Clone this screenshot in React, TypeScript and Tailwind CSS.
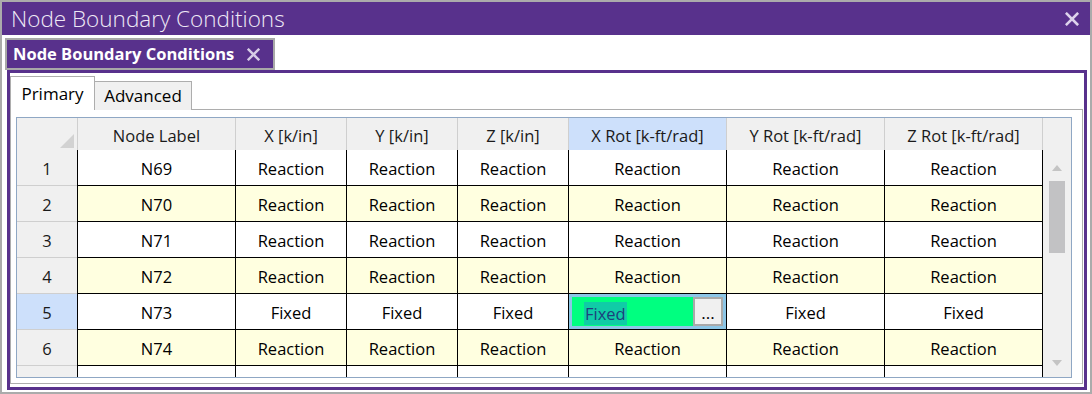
import React from 'react';

const COLS = [
  { label: 'Node Label', w: 'w-[158px]' },
  { label: 'X [k/in]', w: 'w-[111px]' },
  { label: 'Y [k/in]', w: 'w-[111px]' },
  { label: 'Z [k/in]', w: 'w-[111px]' },
  { label: 'X Rot [k-ft/rad]', w: 'w-[158px]' },
  { label: 'Y Rot [k-ft/rad]', w: 'w-[158px]' },
  { label: 'Z Rot [k-ft/rad]', w: 'w-[158px]' },
];

const ROWS = [
  { n: 1, node: 'N69', v: 'Reaction' },
  { n: 2, node: 'N70', v: 'Reaction' },
  { n: 3, node: 'N71', v: 'Reaction' },
  { n: 4, node: 'N72', v: 'Reaction' },
  { n: 5, node: 'N73', v: 'Fixed' },
  { n: 6, node: 'N74', v: 'Reaction' },
  { n: 7, node: '', v: '' },
];

const Close: React.FC<{ size: number; color: string }> = ({ size, color }) => (
  <svg width={size} height={size} viewBox="0 0 12 12">
    <path d="M1.5 1.5 L10.5 10.5 M10.5 1.5 L1.5 10.5" stroke={color} strokeWidth="2.2" strokeLinecap="square" />
  </svg>
);

const EditCell: React.FC = () => (
  <div className="flex h-full border-[3px] border-[#8cc6e6]">
    <div className="flex-1 bg-[#00ff80] flex items-center pl-[12px] pt-[3px]">
      <span className="bg-[#10cca6] text-[#1d3f7c] leading-[23px] px-[1px]">Fixed</span>
    </div>
    <div className="w-[30px] border-2 border-[#a9a9a9] bg-[#f0f0f0] flex items-center justify-center text-[17px] text-black pt-[2px]">
      ...
    </div>
  </div>
);

const Grid: React.FC = () => (
  <div className="w-[1056px] h-[261px] border border-[#8fa7c4] flex overflow-hidden">
    <div className="w-[1026px] flex flex-col">
      {/* header */}
      <div className="flex h-[32px] shrink-0 bg-[#f0f0f0] text-[#1a1a1a]">
        <div className="w-[60px] flex items-end justify-end pr-[3px] pb-[2px]">
          <svg width="14" height="14" viewBox="0 0 14 14">
            <path d="M14 0 L14 14 L0 14 Z" fill="#d2d2d2" />
          </svg>
        </div>
        {COLS.map((c, i) => (
          <div
            key={c.label}
            className={`${c.w} ${i === 6 ? 'w-[159px] border-r' : ''} border-l border-[#cfcfcf] flex items-center justify-center pt-[4px] ${i === 4 ? 'bg-[#cde0fb]' : ''}`}
          >
            {c.label}
          </div>
        ))}
      </div>
      {/* rows */}
      {ROWS.map((r) => (
        <div key={r.n} className="flex h-[36px] shrink-0">
          <div className={`w-[60px] border-b border-[#cfcfcf] flex items-center justify-center pt-[4px] text-[#1a1a1a] ${r.n === 5 ? 'bg-[#cde0fb]' : 'bg-[#f0f0f0]'}`}>
            {r.n < 7 ? r.n : ''}
          </div>
          {COLS.map((c, i) => {
            const editing = r.n === 5 && i === 4;
            return (
              <div
                key={c.label}
                className={`${c.w} ${i === 6 ? 'w-[159px] border-r' : ''} border-l border-b border-black flex text-black ${r.n % 2 === 0 ? 'bg-[#ffffe0]' : 'bg-white'} ${editing ? '' : 'items-center justify-center pt-[4px]'}`}
              >
                {editing ? <div className="w-full"><EditCell /></div> : i === 0 ? r.node : r.v}
              </div>
            );
          })}
        </div>
      ))}
    </div>
    {/* scrollbar */}
    <div className="w-[28px] bg-[#f0f0f0] flex flex-col items-center pt-[47px]">
      <svg width="10" height="6" viewBox="0 0 10 6">
        <path d="M5 0 L10 6 L0 6 Z" fill="#c4c4c4" />
      </svg>
      <div className="mt-[10px] w-[16px] h-[72px] bg-[#c2c2c4]" />
      <div className="mt-[107px]">
        <svg width="10" height="6" viewBox="0 0 10 6">
          <path d="M0 0 L10 0 L5 6 Z" fill="#c4c4c4" />
        </svg>
      </div>
    </div>
  </div>
);

export default function App() {
  return (
    <div
      className="w-[1092px] h-[394px] border-2 border-[#ababab] bg-white flex flex-col overflow-hidden"
      style={{ fontFamily: '"Open Sans", "Noto Sans", sans-serif' }}
    >
      {/* title bar */}
      <div className="h-[33px] shrink-0 bg-[#58318c] flex items-center justify-between pl-[9px] pr-[11px]">
        <span className="text-[22.5px] font-light text-[#efe9f6] leading-none pt-[2px]">Node Boundary Conditions</span>
        <Close size={14} color="#ddd3ec" />
      </div>

      {/* document tab */}
      <div className="pt-[3px] pl-[3px] shrink-0">
        <div className="w-[270px] h-[32px] border-2 border-[#a8a8a8] bg-[#58318c] flex items-center pl-[6px] gap-[13px]">
          <span className="text-[16.5px] font-bold text-white pt-[1px]">Node Boundary Conditions</span>
          <Close size={13} color="#d6cde6" />
        </div>
      </div>

      {/* panel */}
      <div className="flex-1 ml-[5px] mr-[3px] mb-[2px] border-[3px] border-[#58318c] bg-white flex flex-col pt-[3px] pr-[1px] pb-[3px]">
        <div className="flex items-end h-[34px] shrink-0 relative z-10 -mb-px">
          <div className="w-[85px] h-[34px] border border-b-0 border-[#adadad] bg-white flex items-center justify-center text-[17px] font-medium text-black">
            Primary
          </div>
          <div className="w-[97px] h-[29px] border border-l-0 border-b-0 border-[#adadad] bg-[#f0f0f0] flex items-center justify-center text-[17px] font-medium text-black">
            Advanced
          </div>
        </div>
        <div className="flex-1 border border-[#adadad] pl-[5px] pt-[7px] text-[16.5px]">
          <Grid />
        </div>
      </div>
    </div>
  );
}
